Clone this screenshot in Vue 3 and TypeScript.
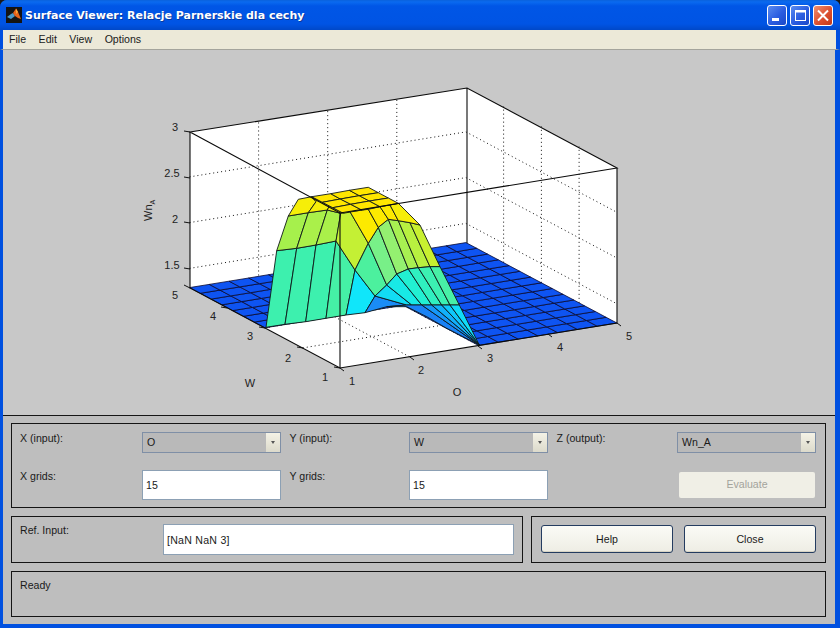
<script setup lang="ts">
type Pt = [number, number];

const menus = ["File", "Edit", "View", "Options"];

// axes projection: O and W run 1..5, z runs from the floor up
const origin: Pt = [340.5, 368];
const oStep: Pt = [69.1, -11.25];
const wStep: Pt = [-37.75, -20.1];
const zPx = 91.5;
const zFloor = 1.29;

function project(o: number, w: number, z = zFloor): Pt {
  return [
    origin[0] + (o - 1) * oStep[0] + (w - 1) * wStep[0],
    origin[1] + (o - 1) * oStep[1] + (w - 1) * wStep[1] - (z - zFloor) * zPx,
  ];
}

function pts(list: Pt[]) {
  return list.map((p) => `${p[0].toFixed(1)},${p[1].toFixed(1)}`).join(" ");
}

const ticks = [2, 3, 4];
const zTicks = [1.5, 2, 2.5];
const zTop = 3;

const gridLines: [Pt, Pt, Pt][] = [];
for (const t of ticks) {
  // floor lines plus the walls they run up into
  gridLines.push([project(t, 1), project(t, 5), project(t, 5, zTop)]);
  gridLines.push([project(1, t), project(5, t), project(5, t, zTop)]);
}
for (const z of zTicks) {
  gridLines.push([project(1, 5, z), project(5, 5, z), project(5, 1, z)]);
}

// floor cells: the part of the surface that stays at the bottom
const floorCells: string[] = [];
const cell = 4 / 14;
for (let i = 0; i < 14; i++) {
  for (let j = 0; j < 14; j++) {
    if (i >= 7 || j >= 7) {
      const o = 1 + i * cell;
      const w = 1 + j * cell;
      floorCells.push(
        pts([
          project(o, w),
          project(o + cell, w),
          project(o + cell, w + cell),
          project(o, w + cell),
        ]),
      );
    }
  }
}

// raised part, traced panel by panel (coordinates relative to 240,170 at 3x)
const raw: [string, number[]][] = [
  ["#3df0ae", [78, 472, 135, 463, 170, 235, 110, 242]],
  ["#3df0ae", [135, 463, 197, 455, 228, 225, 170, 235]],
  ["#3df0ae", [197, 455, 258, 445, 288, 213, 228, 225]],
  ["#45f0a6", [258, 445, 318, 435, 345, 300, 288, 213]],
  ["#10e6fa", [318, 435, 375, 428, 405, 378, 345, 300]],
  ["#a6f04c", [110, 242, 170, 235, 205, 128, 145, 138]],
  ["#aaf04a", [170, 235, 228, 225, 262, 120, 205, 128]],
  ["#aaf04a", [228, 225, 288, 213, 302, 130, 262, 120]],
  ["#f6ee08", [145, 138, 205, 128, 228, 95, 215, 80, 175, 88]],
  ["#f6ee08", [205, 128, 262, 120, 268, 108, 215, 80, 228, 95]],
  ["#f6ee08", [262, 120, 302, 130, 310, 130, 268, 108]],
  ["#c4f034", [302, 130, 330, 125, 385, 220, 345, 300, 288, 213]],
  ["#4cf09e", [385, 220, 345, 300, 405, 378, 440, 345]],
  ["#78f088", [385, 220, 415, 172, 470, 312, 440, 345]],
  ["#94f070", [415, 172, 445, 148, 505, 297, 470, 312]],
  ["#a8f052", [445, 148, 475, 152, 535, 293, 505, 297]],
  ["#b8f040", [475, 152, 510, 158, 570, 290, 535, 293]],
  ["#c8f030", [510, 158, 540, 165, 600, 290, 570, 290]],
  ["#fdea00", [330, 125, 385, 118, 415, 172, 385, 220]],
  ["#fdea00", [385, 118, 420, 110, 445, 148, 415, 172]],
  ["#fdea00", [420, 110, 450, 105, 475, 152, 445, 148]],
  ["#f6ee08", [450, 105, 475, 100, 540, 165, 510, 158, 475, 152]],
  ["#1a8cf6", [375, 428, 405, 378, 500, 405, 440, 410]],
  ["#12dcf4", [405, 378, 440, 345, 515, 405, 500, 405]],
  ["#18eae6", [440, 345, 470, 312, 545, 405, 515, 405]],
  ["#22f0d2", [470, 312, 505, 297, 575, 405, 545, 405]],
  ["#30f0c0", [505, 297, 535, 293, 605, 405, 575, 405]],
  ["#3cf0b2", [535, 293, 570, 290, 630, 405, 605, 405]],
  ["#48f0a6", [570, 290, 600, 290, 658, 405, 630, 405]],
  ["#1a82f6", [440, 410, 500, 405, 545, 405, 718, 525, 620, 475, 560, 440, 500, 410]],
  ["#1698f8", [545, 405, 575, 405, 718, 525]],
  ["#12b0fa", [575, 405, 605, 405, 718, 525]],
  ["#10c8fa", [605, 405, 630, 405, 718, 525]],
  ["#10dcf6", [630, 405, 658, 405, 718, 525]],
  ["#ffe600", [215, 80, 272, 71, 301, 87, 247, 97]],
  ["#ffe600", [272, 71, 328, 61, 358, 77, 301, 87]],
  ["#ffe600", [328, 61, 385, 52, 415, 68, 358, 77]],
  ["#ffe600", [247, 97, 301, 87, 332, 103, 278, 113]],
  ["#ffe600", [301, 87, 358, 77, 388, 93, 332, 103]],
  ["#ffe600", [358, 77, 415, 68, 445, 84, 388, 93]],
  ["#ffe600", [278, 113, 332, 103, 365, 120, 310, 130]],
  ["#ffe600", [332, 103, 388, 93, 420, 110, 365, 120]],
  ["#ffe600", [388, 93, 445, 84, 475, 100, 420, 110]],
];

const panels = raw.map(([fill, c]) => {
  const list: Pt[] = [];
  for (let i = 0; i < c.length; i += 2) {
    list.push([240 + c[i] / 3, 170 + c[i + 1] / 3]);
  }
  return { fill, points: pts(list) };
});

const axisTexts = [
  { x: 175, y: 131, t: "3" },
  { x: 172, y: 177, t: "2.5" },
  { x: 175, y: 223, t: "2" },
  { x: 172, y: 269, t: "1.5" },
  { x: 175, y: 299, t: "5" },
  { x: 213, y: 320, t: "4" },
  { x: 250, y: 340, t: "3" },
  { x: 288, y: 362, t: "2" },
  { x: 325, y: 381, t: "1" },
  { x: 352, y: 385, t: "1" },
  { x: 421, y: 374, t: "2" },
  { x: 490, y: 362, t: "3" },
  { x: 560, y: 351, t: "4" },
  { x: 629, y: 340, t: "5" },
  { x: 250, y: 387, t: "W" },
  { x: 457, y: 396, t: "O" },
];

const tickMarks: number[][] = [
  [190, 132, 184, 131], [190, 178, 184, 177], [190, 223, 184, 222], [190, 269, 184, 268],
  [190, 288, 184, 285], [227, 308, 221, 307], [265, 328, 259, 327], [303, 348, 297, 347], [340, 368, 334, 367],
  [340, 368, 344, 371], [410, 357, 414, 360], [478, 346, 482, 349], [548, 334, 552, 337], [617, 323, 621, 326],
];

const selects = [
  { label: "X (input):", value: "O" },
  { label: "Y (input):", value: "W" },
  { label: "Z (output):", value: "Wn_A" },
];
const grids = [
  { label: "X grids:", value: "15" },
  { label: "Y grids:", value: "15" },
];
</script>

<template>
  <div class="window">
    <header class="titlebar">
      <svg class="app-icon" width="16" height="16" viewBox="0 0 16 16">
        <rect width="16" height="16" fill="#141414" />
        <path d="M1 10 L5 7 L7 6 L9 9 L5 12 Z" fill="#4a98c8" />
        <path d="M7 6 L10 1.5 L12 5 L15 12 L12 11 L9 9 Z" fill="#e8641a" />
        <path d="M10 1.5 L12 5 L10 7 Z" fill="#f8a838" />
      </svg>
      <span class="title">Surface Viewer: Relacje Parnerskie dla cechy</span>
      <div class="caption-buttons">
        <div class="cap cap--blue">
          <svg width="18" height="19" viewBox="0 0 18 19"><rect x="4" y="12" width="7" height="3" fill="#fff" /></svg>
        </div>
        <div class="cap cap--blue">
          <svg width="18" height="19" viewBox="0 0 18 19">
            <rect x="4.5" y="4.5" width="10" height="10" fill="none" stroke="#fff" />
            <rect x="4" y="4" width="11" height="2.5" fill="#fff" />
          </svg>
        </div>
        <div class="cap cap--red">
          <svg width="18" height="19" viewBox="0 0 18 19">
            <path d="M4 4.5 L14 14.5 M14 4.5 L4 14.5" stroke="#fff" stroke-width="2" />
          </svg>
        </div>
      </div>
    </header>

    <nav class="menubar">
      <span v-for="m in menus" :key="m">{{ m }}</span>
    </nav>

    <main class="client">
      <svg class="plot" width="832" height="365" viewBox="3 50 832 365">
        <polygon
          points="190,132 467,88 617,168 617,323 340,368 190,288"
          fill="#fff"
        />
        <polyline
          v-for="(g, i) in gridLines"
          :key="'g' + i"
          :points="pts(g)"
          class="dotted"
        />
        <polygon
          v-for="(c, i) in floorCells"
          :key="'f' + i"
          :points="c"
          fill="#0e54f2"
          stroke="#0a0a30"
          stroke-width="0.8"
        />
        <polygon
          v-for="(p, i) in panels"
          :key="'p' + i"
          :points="p.points"
          :fill="p.fill"
          stroke="#101818"
          stroke-width="0.9"
        />
        <g class="box">
          <path d="M190 132 L467 88 L617 168 L340 213 Z" />
          <path d="M190 132 V288 L340 368 L617 323 V168" />
          <path d="M340 213 V368" />
          <path d="M467 88 V243" />
        </g>
        <line
          v-for="(t, i) in tickMarks"
          :key="'t' + i"
          :x1="t[0]"
          :y1="t[1]"
          :x2="t[2]"
          :y2="t[3]"
          class="tick"
        />
        <text
          v-for="(a, i) in axisTexts"
          :key="'a' + i"
          :x="a.x"
          :y="a.y"
          class="axis-text"
        >{{ a.t }}</text>
        <text class="axis-text axis-text--z" transform="translate(152 221) rotate(-90)">Wn<tspan dy="3" font-size="7">A</tspan></text>
      </svg>

      <section class="controls">
        <div class="panel panel--fields">
          <template v-for="(s, i) in selects" :key="s.label">
            <span class="label" :class="{ 'label--inset': i > 0 }">{{ s.label }}</span>
            <div class="combo">
              <span>{{ s.value }}</span>
              <div class="combo__arrow"></div>
            </div>
          </template>
          <template v-for="(g, i) in grids" :key="g.label">
            <span class="label" :class="{ 'label--inset': i > 0 }">{{ g.label }}</span>
            <div class="edit">{{ g.value }}</div>
          </template>
          <span></span>
          <button class="evaluate" type="button" disabled>Evaluate</button>
        </div>

        <div class="row">
          <div class="panel panel--ref">
            <span class="label">Ref. Input:</span>
            <div class="edit edit--ref">[NaN NaN 3]</div>
          </div>
          <div class="panel panel--buttons">
            <button class="btn" type="button">Help</button>
            <button class="btn" type="button">Close</button>
          </div>
        </div>

        <div class="panel panel--status">Ready</div>
      </section>
    </main>
  </div>
</template>

<style>
body {
  background: #1a1a1a;
}
</style>

<style scoped>
.window {
  width: 840px;
  height: 628px;
  display: flex;
  flex-direction: column;
  background: #0050e0;
  border-radius: 7px 7px 0 0;
  overflow: hidden;
  font-family: "Liberation Sans", Arial, sans-serif;
  font-size: 10.6px;
  color: #1a1a1a;
}

.titlebar {
  height: 30px;
  flex: none;
  display: flex;
  align-items: center;
  padding: 0 7px 0 6px;
  box-sizing: border-box;
  background: linear-gradient(#0a62dc 0, #0a6af0 2px, #0056e6 6px, #0054e4 24px, #0048c8 30px);
}

.app-icon {
  flex: none;
}

.title {
  margin-left: 3px;
  font-family: "DejaVu Sans", Verdana, sans-serif;
  font-weight: 700;
  font-size: 11px;
  color: #fff;
  text-shadow: 1px 1px 0 #0a3a9c;
  white-space: nowrap;
}

.caption-buttons {
  margin-left: auto;
  display: flex;
  gap: 3px;
}

.cap {
  width: 20px;
  height: 21px;
  box-sizing: border-box;
  border: 1px solid #fff;
  border-radius: 3px;
  display: flex;
}

.cap--blue {
  background: linear-gradient(135deg, #5a8cf0, #2a5ce0 55%, #1a48c8);
}

.cap--red {
  background: linear-gradient(135deg, #f09070, #dc5030 55%, #c03818);
}

.menubar {
  height: 20px;
  flex: none;
  display: flex;
  align-items: center;
  gap: 12.5px;
  padding: 0 0 1px 6px;
  box-sizing: border-box;
  background: #ece9d8;
  border-bottom: 1px solid #a4a49c;
  border-left: 3px solid #0050e0;
  border-right: 4px solid #0050e0;
}

.client {
  flex: 1;
  margin: 0 5px 4px 3px;
  display: flex;
  flex-direction: column;
  background: #bebebe;
  min-height: 0;
}

.plot {
  display: block;
  flex: none;
  background: #c8c8c8;
}

.dotted {
  fill: none;
  stroke: #111;
  stroke-width: 1;
  stroke-dasharray: 1 3;
}

.box path {
  fill: none;
  stroke: #0a0a0a;
  stroke-width: 1.1;
}

.tick {
  stroke: #111;
  stroke-width: 1;
}

.axis-text {
  font-family: "Liberation Sans", Arial, sans-serif;
  font-size: 11px;
  fill: #222;
  text-anchor: middle;
}

.axis-text--z {
  text-anchor: start;
}

.controls {
  flex: 1;
  display: flex;
  flex-direction: column;
  gap: 8px;
  padding: 7px 9px 0 8px;
  border-top: 1px solid #161616;
  box-sizing: border-box;
}

.panel {
  border: 1px solid #141414;
  box-sizing: border-box;
}

.panel--fields {
  height: 85px;
  display: grid;
  grid-template-columns: 122px 139px 128px 139px 129px 139px;
  grid-template-rows: 21px 30px;
  row-gap: 17px;
  padding: 8px 0 0 8px;
}

.label {
  line-height: 13px;
}

.label--inset {
  padding-left: 8.5px;
}

.combo {
  display: flex;
  align-items: center;
  justify-content: space-between;
  box-sizing: border-box;
  border: 1px solid #7f8fa6;
  background: #b9b9b9;
  padding: 0 0 0 4px;
  line-height: 19px;
}

.combo > span {
  align-self: flex-start;
}

.combo__arrow {
  width: 14px;
  height: 19px;
  background: linear-gradient(#f4f2e6, #dcdacb);
  position: relative;
}

.combo__arrow::after {
  content: "";
  position: absolute;
  left: 5px;
  top: 8px;
  border: 2px solid transparent;
  border-top: 3px solid #555;
  border-bottom: 0;
}

.edit {
  background: #fff;
  border: 1px solid #8ca0b4;
  box-sizing: border-box;
  display: flex;
  align-items: center;
  padding-left: 3px;
}

.edit--ref {
  letter-spacing: 0.25px;
}

.evaluate {
  margin: 2px 1px 2px 2px;
  padding: 0 0 2px;
  font: inherit;
  color: #a3a39c;
  background: #f0efe6;
  border: 0;
  border-radius: 2px;
}

.row {
  display: flex;
  gap: 8px;
  height: 47px;
}

.panel--ref {
  width: 512px;
  display: grid;
  grid-template-columns: 143px 351px;
  padding: 7px 0 7px 8px;
}

.panel--buttons {
  flex: 1;
  display: flex;
  gap: 11px;
  padding: 8px 9px 9px;
}

.btn {
  flex: 1;
  font: inherit;
  color: #1a1a1a;
  background: linear-gradient(#fbfbf6, #eeede4);
  border: 1px solid #243c60;
  border-radius: 3px;
  box-shadow: inset 0 -1px 0 #d8d4c4;
  padding: 0;
}

.panel--status {
  height: 46px;
  padding: 7px 8px;
}
</style>
